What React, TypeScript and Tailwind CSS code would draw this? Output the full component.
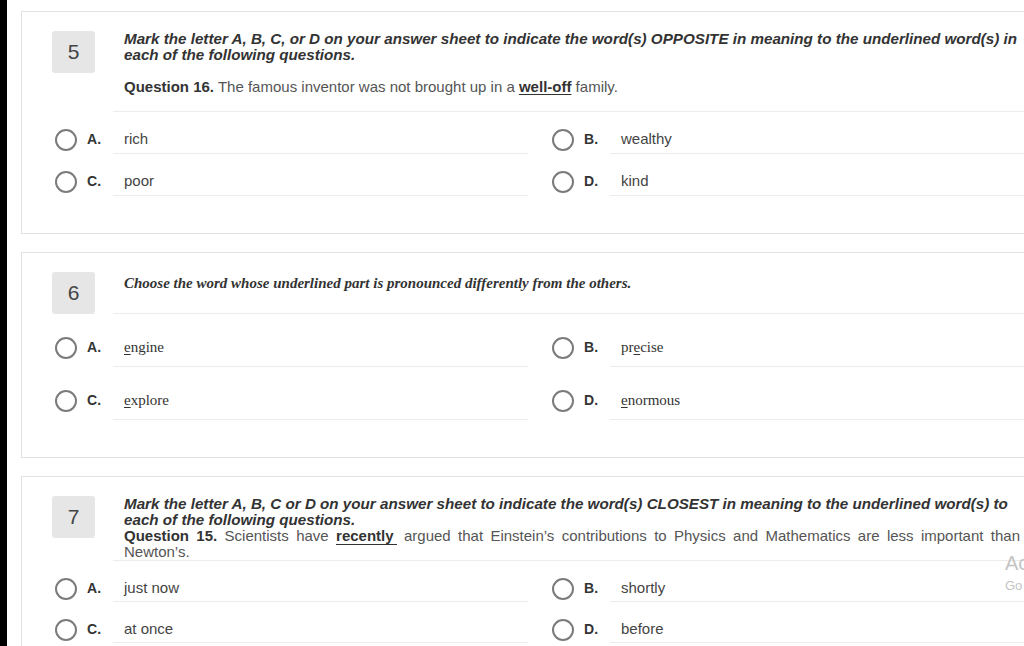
import React from "react";

type Opt = { key: string; text: React.ReactNode };

type QuestionProps = {
  num: number;
  header: React.ReactNode;
  options: Opt[];
  serif?: boolean;
  rowPad: string;
};

const sans = "font-['Liberation_Sans',Arial,sans-serif]";
const serifFont = "font-['Liberation_Serif','Times_New_Roman',serif]";

function Radio() {
  return <span className="block w-[22px] h-[22px] rounded-full border-2 border-[#7b7b7b] bg-white shrink-0" />;
}

function Option({ opt, left, serif, rowPad }: { opt: Opt; left: boolean; serif?: boolean; rowPad: string }) {
  return (
    <div className={left ? "flex w-[506px] pl-[33px]" : "flex flex-1 pl-[24px]"}>
      <div className={"flex items-center " + rowPad}>
        <Radio />
        <span className={"ml-[10px] w-[26px] h-[22px] flex items-center text-[14px] font-bold text-[#333] " + sans}>
          {opt.key}.
        </span>
      </div>
      <div className={"flex-1 flex items-center pl-[11px] border-b border-[#ececec] " + rowPad}>
        <span
          className={
            "h-[22px] flex items-center text-[15px] " + (serif ? serifFont + " text-[#333]" : sans + " text-[#444]")
          }
        >
          {opt.text}
        </span>
      </div>
    </div>
  );
}

function Question({ num, header, options, serif, rowPad }: QuestionProps) {
  return (
    <div className="w-[1040px] border border-[#e3e3e3] bg-white pt-[19px] pb-[37px] mb-[18px]">
      {/* header */}
      <div className="flex pl-[30px]">
        <div className={"w-[43px] h-[42px] shrink-0 rounded-[3px] bg-[#e6e6e6] flex items-center justify-center text-[21px] text-[#444] " + sans}>
          {num}
        </div>
        <div className="ml-[18px] flex-1 min-h-[42px] border-b border-[#ececec] pl-[11px] pr-[40px]">{header}</div>
      </div>
      {/* options */}
      <div className="flex">
        <Option opt={options[0]} left serif={serif} rowPad={rowPad} />
        <Option opt={options[1]} left={false} serif={serif} rowPad={rowPad} />
      </div>
      <div className="flex">
        <Option opt={options[2]} left serif={serif} rowPad={rowPad} />
        <Option opt={options[3]} left={false} serif={serif} rowPad={rowPad} />
      </div>
    </div>
  );
}

function U({ children }: { children: React.ReactNode }) {
  return <span className="underline underline-offset-[2px]">{children}</span>;
}

export default function App() {
  return (
    <div className={"w-[1024px] h-[646px] overflow-hidden bg-white flex relative " + sans}>
      <div className="w-[7px] bg-black shrink-0" />
      <div className="pl-[14px] pt-[11px]">
        <Question
          num={5}
          rowPad="pt-[16px] pb-[3px]"
          header={
            <div className="w-[896px] pb-[15px]">
              <p className="text-[15.2px] leading-[16px] font-bold italic text-[#333]">
                Mark the letter A, B, C, or D on your answer sheet to indicate the word(s) OPPOSITE in meaning to the
                underlined word(s) in each of the following questions.
              </p>
              <p className="mt-[15px] text-[15px] leading-[18px] text-[#555]">
                <b className="text-[#333]">Question 16.</b> The famous inventor was not brought up in a{" "}
                <b className="text-[#333] underline underline-offset-[2px]">well-off</b> family.
              </p>
            </div>
          }
          options={[
            { key: "A", text: "rich" },
            { key: "B", text: "wealthy" },
            { key: "C", text: "poor" },
            { key: "D", text: "kind" },
          ]}
        />
        <Question
          num={6}
          serif
          rowPad="pt-[22px] pb-[8px]"
          header={
            <p className={"w-[896px] pt-[3px] text-[15px] leading-[16px] font-bold italic text-[#333] " + serifFont}>
              Choose the word whose underlined part is pronounced differently from the others.
            </p>
          }
          options={[
            { key: "A", text: <><U>e</U>ngine</> },
            { key: "B", text: <>pr<U>e</U>cise</> },
            { key: "C", text: <><U>e</U>xplore</> },
            { key: "D", text: <><U>e</U>normous</> },
          ]}
        />
        <Question
          num={7}
          rowPad="pt-[16px] pb-[2px]"
          header={
            <div className="w-[896px]">
              <p className="text-[15.2px] leading-[16px] font-bold italic text-[#333]">
                Mark the letter A, B, C or D on your answer sheet to indicate the word(s) CLOSEST in meaning to the
                underlined word(s) to each of the following questions.
              </p>
              <p className="text-[15px] leading-[16px] text-[#555] text-justify">
                <b className="text-[#333]">Question 15.</b> Scientists have{" "}
                <b className="text-[#333] border-b border-[#333] pr-[3px]">recently</b> argued that Einstein’s
                contributions to Physics and Mathematics are less important than Newton’s.
              </p>
            </div>
          }
          options={[
            { key: "A", text: "just now" },
            { key: "B", text: "shortly" },
            { key: "C", text: "at once" },
            { key: "D", text: "before" },
          ]}
        />
      </div>
      {/* windows activation watermark */}
      <div className="absolute left-[1005px] top-[553px] text-[#c4c4c4] leading-none whitespace-nowrap">
        <div className="text-[20px]">Activate Windows</div>
        <div className="mt-[6px] text-[13px]">Go to Settings to activate Windows.</div>
      </div>
    </div>
  );
}
